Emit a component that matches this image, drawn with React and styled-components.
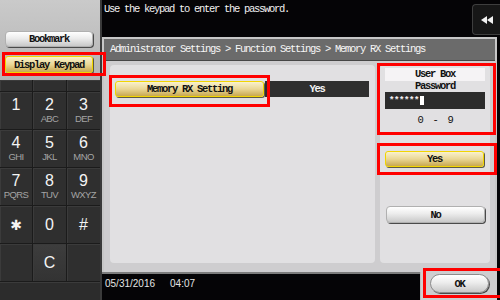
import React from 'react';
import styled, { createGlobalStyle, css } from 'styled-components';

const GlobalStyle = createGlobalStyle`
    html, body {
        margin: 0;
        padding: 0;
        background: #050406;
    }
    body {
        width: 500px;
        height: 300px;
        overflow: hidden;
    }
`;

const mono = css`
    font-family: "Liberation Mono", "DejaVu Sans Mono", monospace;
    font-size: 10.5px;
    letter-spacing: -1.3px;
`;

const Screen = styled.div`
    display: flex;
    width: 500px;
    height: 300px;
    background: #050406;
`;

/* ---------- left side ---------- */

const SidePane = styled.div`
    width: 100px;
    display: flex;
    flex-direction: column;
    border-right: 2px solid #3a3a3a;
`;

const SideTop = styled.div`
    height: 80px;
    box-sizing: border-box;
    padding: 31px 0 0 5px;
    background: linear-gradient(#cacaca, #b4b4b4);
    display: flex;
    flex-direction: column;
    gap: 9px;
`;

const Highlight = styled.div`
    position: relative;
    &::after {
        content: '';
        position: absolute;
        inset: ${p => p.$inset};
        border: 3px solid #ff0000;
        pointer-events: none;
    }
`;

const buttonBase = css`
    ${mono};
    font-weight: bold;
    color: #111;
    box-sizing: border-box;
    display: flex;
    align-items: center;
    justify-content: center;
    width: ${p => p.$w}px;
    height: ${p => p.$h || 16}px;
`;

const LightButton = styled.div`
    ${buttonBase};
    border-radius: 4px;
    background: linear-gradient(#ffffff, #ececec 45%, #c9c9c9);
    border: 1px solid #b0b0b0;
    box-shadow: 1px 1px 0 #4a4a4a;
`;

const YellowButton = styled.div`
    ${buttonBase};
    border-radius: 3px;
    background: linear-gradient(#f9f1cd, #ead795 50%, #c8a851);
    border: 1px solid #f2d500;
    box-shadow: 1px 1px 0 #5e5a44;
`;

const Keypad = styled.div`
    flex: 1;
    display: grid;
    grid-template-columns: 33px 34px 33px;
    grid-template-rows: 12px repeat(5, 38px) 1fr;
    background: #2e2e2e;
`;

const KeyCell = styled.div`
    box-sizing: border-box;
    border-right: ${p => (p.$last ? 'none' : '1px solid #1b1b1b')};
    border-bottom: 1px solid #1b1b1b;
    box-shadow: inset 1px 1px 0 #3b3b3b;
    background: ${p => (p.$active ? 'linear-gradient(#3d3d3d, #333)' : '#2f2f2f')};
    display: flex;
    flex-direction: column;
    align-items: center;
    justify-content: center;
`;

const KeyFoot = styled.div`
    grid-column: 1 / span 3;
    background: #2c2c2c;
    box-shadow: inset 0 1px 0 #3b3b3b;
`;

const Digit = styled.div`
    font-family: "Liberation Sans", Arial, sans-serif;
    font-size: 16px;
    line-height: 16px;
    height: 16px;
    color: #f4f4f4;
`;

const Symbol = styled(Digit)`
    font-family: "DejaVu Sans", sans-serif;
    font-size: 14px;
    font-weight: bold;
`;

const Letters = styled.div`
    font-family: "Liberation Sans", Arial, sans-serif;
    font-size: 9.5px;
    letter-spacing: -0.6px;
    line-height: 11px;
    height: 11px;
    color: #a4a4a4;
`;

const keyRows = [
    [['1', ' '], ['2', 'ABC'], ['3', 'DEF']],
    [['4', 'GHI'], ['5', 'JKL'], ['6', 'MNO']],
    [['7', 'PQRS'], ['8', 'TUV'], ['9', 'WXYZ']],
    [['✱', null], ['0', null], ['#', null]],
    [['', null], ['C', null], ['', null]],
];

/* ---------- main side ---------- */

const MainPane = styled.div`
    flex: 1;
    display: flex;
    flex-direction: column;
    min-width: 0;
`;

const TopBar = styled.div`
    height: 37px;
    display: flex;
    justify-content: space-between;
    align-items: flex-start;
`;

const Message = styled.div`
    ${mono};
    color: #f0f0f0;
    line-height: 12px;
    padding: 3px 0 0 2px;
`;

const BackButton = styled.div`
    width: 28px;
    height: 31px;
    margin-top: 4px;
    box-sizing: border-box;
    border: 1px solid #3e3e3e;
    border-right: none;
    border-radius: 4px 0 0 4px;
    background: #171717;
    display: flex;
    align-items: center;
    justify-content: center;
`;

const Panel = styled.div`
    width: 395px;
    height: 235px;
    box-sizing: border-box;
    border: 2px solid #c7c7c7;
    border-bottom: none;
    display: flex;
    flex-direction: column;
`;

const Breadcrumb = styled.div`
    ${mono};
    height: 22px;
    box-sizing: border-box;
    line-height: 21px;
    padding-left: 6px;
    color: #f6f6f6;
    background: #6b6b6b;
    border-bottom: 1px solid #464646;
    white-space: nowrap;
`;

const PanelBody = styled.div`
    flex: 1;
    display: flex;
    gap: 5px;
    padding: 4px 5px 9px 6px;
    background: #cecdcf;
`;

const Card = styled.div`
    background: #e1e0e2;
    border-radius: 4px;
    display: flex;
    flex-direction: column;
`;

const SettingsCard = styled(Card)`
    width: 265px;
    padding: 16px 0 0 5px;
    box-sizing: border-box;
`;

const InputCard = styled(Card)`
    flex: 1;
    padding: 3px 5px 0;
`;

const SettingRow = styled.div`
    display: flex;
    gap: 1px;
`;

const ValueBar = styled.div`
    ${mono};
    font-weight: bold;
    width: 104px;
    height: 16px;
    display: flex;
    align-items: center;
    justify-content: center;
    background: #2f2f2f;
    color: #f4f4f4;
`;

const FieldGroup = styled.div`
    display: flex;
    flex-direction: column;
`;

const FieldLabel = styled.div`
    ${mono};
    font-weight: bold;
    color: #111;
    text-align: center;
    line-height: ${p => p.$h}px;
    height: ${p => p.$h}px;
    background: ${p => p.$bg || 'transparent'};
`;

const PasswordField = styled.div`
    height: 17px;
    background: #2c2c2c;
    display: flex;
    align-items: center;
    padding-left: 4px;
`;

const Stars = styled.span`
    font-family: "Liberation Mono", monospace;
    font-size: 9px;
    font-weight: bold;
    letter-spacing: -0.4px;
    color: #f0f0f0;
`;

const Caret = styled.span`
    width: 4px;
    height: 9px;
    margin-left: 1px;
    background: #ffffff;
`;

const RangeText = styled.div`
    ${mono};
    color: #111;
    text-align: center;
    white-space: pre;
    line-height: 12px;
    margin-top: 5px;
`;

const Spacer = styled.div`
    height: ${p => p.$h}px;
    flex-shrink: 0;
`;

const StatusBar = styled.div`
    height: 28px;
    display: flex;
    margin-right: 3px;
`;

const DateArea = styled.div`
    flex: 1;
    border-top: 2px solid #7c7c7c;
    display: flex;
    gap: 15px;
    padding: 4px 0 0 3px;
    font-family: "Liberation Sans", Arial, sans-serif;
    font-size: 10px;
    line-height: 12px;
    color: #e4e4e4;
`;

const OkTab = styled.div`
    width: 77px;
    box-sizing: border-box;
    background: #cecdcf;
    border-left: 1px solid #bdbdbd;
    padding: 2px 0 0 9px;
`;

const OkButton = styled(LightButton)`
    border-radius: 10px;
    border-color: #8c8c8c;
`;

const BackIcon = () => (
    <svg width="12" height="8" viewBox="0 0 12 8">
        <polygon points="6,0 0,4 6,8" fill="#f2f2f2" />
        <polygon points="12,0 6,4 12,8" fill="#f2f2f2" />
    </svg>
);

const App = () => {
    return (
        <>
            <GlobalStyle />
            <Screen>
                <SidePane>
                    <SideTop>
                        <LightButton $w={88}>Bookmark</LightButton>
                        <Highlight $inset="-4px -6px -3px -3px">
                            <YellowButton $w={88} $h={17}>Display Keypad</YellowButton>
                        </Highlight>
                    </SideTop>
                    <Keypad>
                        <KeyCell />
                        <KeyCell />
                        <KeyCell $last />
                        {keyRows.map((row, r) =>
                            row.map(([digit, letters], c) => (
                                <KeyCell key={`${r}-${c}`} $last={c === 2} $active={digit === 'C'}>
                                    {digit === '✱' ? <Symbol>{digit}</Symbol> : <Digit>{digit}</Digit>}
                                    {letters !== null && <Letters>{letters}</Letters>}
                                </KeyCell>
                            ))
                        )}
                        <KeyFoot />
                    </Keypad>
                </SidePane>

                <MainPane>
                    <TopBar>
                        <Message>Use the keypad to enter the password.</Message>
                        <BackButton>
                            <BackIcon />
                        </BackButton>
                    </TopBar>

                    <Panel>
                        <Breadcrumb>Administrator Settings &gt; Function Settings &gt; Memory RX Settings</Breadcrumb>
                        <PanelBody>
                            <SettingsCard>
                                <SettingRow>
                                    <Highlight $inset="-6px -6px -10px -6px">
                                        <YellowButton $w={149}>Memory RX Setting</YellowButton>
                                    </Highlight>
                                    <ValueBar>Yes</ValueBar>
                                </SettingRow>
                            </SettingsCard>
                            <InputCard>
                                <Highlight $inset="-5px -11px -9px -8px">
                                    <FieldGroup>
                                        <FieldLabel $h={13} $bg="#f5f3f5">User Box</FieldLabel>
                                        <FieldLabel $h={11}>Password</FieldLabel>
                                        <PasswordField>
                                            <Stars>******</Stars>
                                            <Caret />
                                        </PasswordField>
                                        <RangeText>0  -  9</RangeText>
                                    </FieldGroup>
                                </Highlight>
                                <Spacer $h={25} />
                                <Highlight $inset="-8px -12px -8px -8px">
                                    <YellowButton $w={99}>Yes</YellowButton>
                                </Highlight>
                                <Spacer $h={39} />
                                <LightButton $w={99} $h={17} style={{ marginLeft: 1 }}>No</LightButton>
                            </InputCard>
                        </PanelBody>
                    </Panel>

                    <StatusBar>
                        <DateArea>
                            <span>05/31/2016</span>
                            <span>04:07</span>
                        </DateArea>
                        <OkTab>
                            <Highlight $inset="-6px -8px -5px -7px">
                                <OkButton $w={59} $h={19}>OK</OkButton>
                            </Highlight>
                        </OkTab>
                    </StatusBar>
                </MainPane>
            </Screen>
        </>
    );
};

export default App;
